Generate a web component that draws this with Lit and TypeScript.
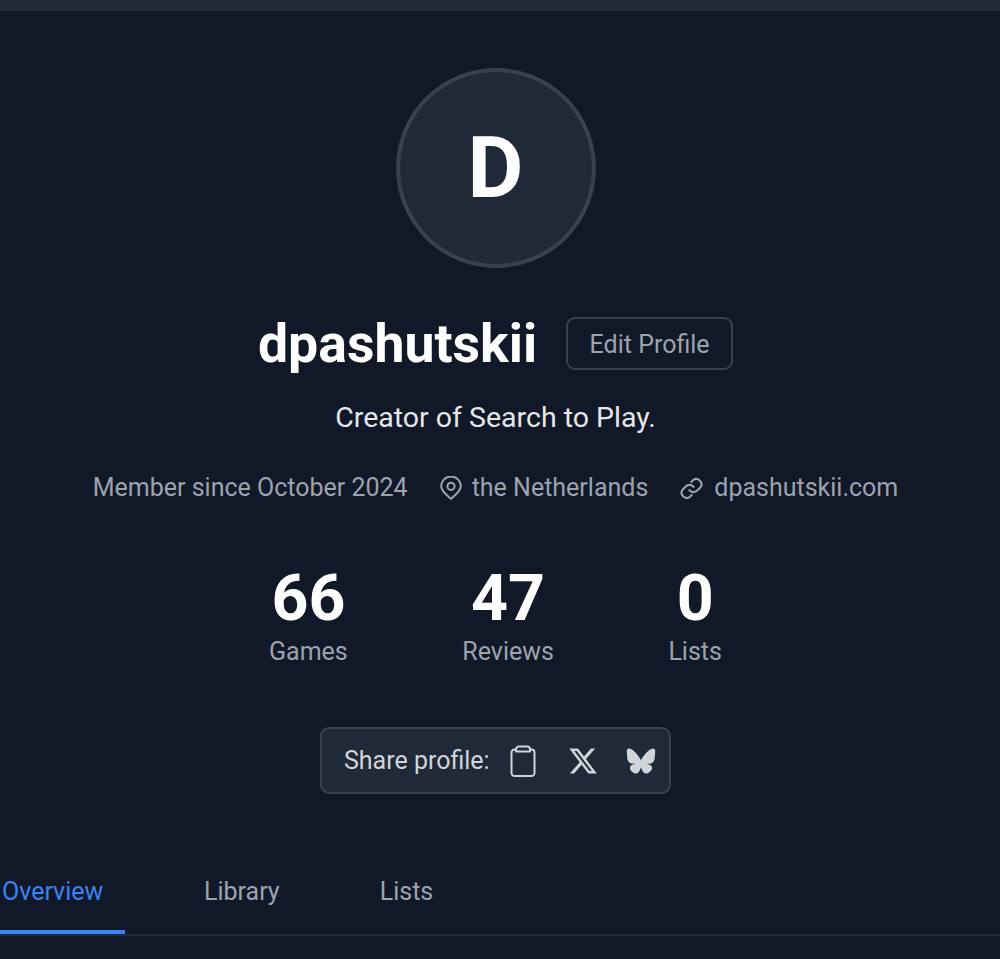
import { LitElement, css, html } from 'lit'
import { customElement } from 'lit/decorators.js'

@customElement('app-root')
export class AppRoot extends LitElement {
  static styles = css`
    :host {
      display: block;
      height: 959px;
      overflow: hidden;
      background: #111827;
      font-family: Roboto, 'Liberation Sans', sans-serif;
      color: #9ca3af;
    }
    .topbar {
      height: 11px;
      background: #1f2937;
    }
    .profile {
      display: flex;
      flex-direction: column;
      align-items: center;
      padding: 57px 9px 0 0;
    }
    .avatar {
      box-sizing: border-box;
      width: 200px;
      height: 200px;
      border: 4px solid #374151;
      border-radius: 50%;
      background: #1f2937;
      color: #fff;
      display: flex;
      align-items: center;
      justify-content: center;
      font-size: 86px;
      font-weight: 700;
      line-height: 1;
    }
    .name-row {
      display: flex;
      align-items: center;
      gap: 29px;
      margin-top: 49px;
      height: 53px;
    }
    h1 {
      margin: 0;
      font-size: 53.6px;
      line-height: 1;
      font-weight: 700;
      color: #fff;
    }
    .edit {
      box-sizing: border-box;
      height: 53px;
      width: 167px;
      border: 2px solid #374151;
      border-radius: 9px;
      background: none;
      color: #9ca3af;
      font: inherit;
      font-size: 25px;
      padding: 2px 0 0;
    }
    .bio {
      margin: 30px 0 0;
      font-size: 28.5px;
      line-height: 36px;
      color: #e5e7eb;
    }
    .meta {
      display: flex;
      align-items: center;
      gap: 31px;
      margin-top: 34px;
      font-size: 25px;
      line-height: 36px;
    }
    .meta-item {
      display: flex;
      align-items: center;
      gap: 10px;
    }
    .meta-item.place {
      margin-left: 1px;
    }
    .meta-item svg {
      display: block;
      fill: none;
      stroke: currentColor;
      stroke-width: 2;
      stroke-linecap: round;
      stroke-linejoin: round;
    }
    .stats {
      display: flex;
      gap: 114.5px;
      margin-top: 56px;
    }
    .stat {
      display: flex;
      flex-direction: column;
      align-items: center;
    }
    .num {
      font-size: 64.5px;
      line-height: 72px;
      font-weight: 700;
      color: #fff;
    }
    .label {
      font-size: 25px;
      line-height: 36px;
    }
    .share {
      box-sizing: border-box;
      display: flex;
      align-items: center;
      width: 351px;
      height: 67px;
      margin-top: 57px;
      padding: 0 22px;
      border: 2px solid #374151;
      border-radius: 9px;
      background: #1f2937;
      color: #d1d5db;
      font-size: 25px;
    }
    .share-label {
      white-space: nowrap;
    }
    .share svg {
      display: block;
      flex: none;
    }
    .clip {
      margin-left: 20px;
    }
    .x {
      margin-left: 33px;
    }
    .bsky {
      margin-left: 29px;
    }
    .tabs {
      display: flex;
      height: 74px;
      margin-top: 68px;
      border-bottom: 2px solid #1f2937;
      box-sizing: border-box;
      font-size: 25px;
    }
    .tab {
      box-sizing: border-box;
      height: 72px;
      padding: 12px 0 0;
      line-height: 36px;
      margin-right: 100px;
    }
    .tab.active {
      width: 125px;
      padding-left: 2px;
      margin-right: 79px;
      color: #3b82f6;
      border-bottom: 4px solid #3b82f6;
    }
  `

  render() {
    return html`
      <div class="topbar"></div>
      <section class="profile">
        <div class="avatar">D</div>
        <div class="name-row">
          <h1>dpashutskii</h1>
          <button class="edit">Edit Profile</button>
        </div>
        <p class="bio">Creator of Search to Play.</p>
        <div class="meta">
          <span class="meta-item">Member since October 2024</span>
          <span class="meta-item place">
            <svg width="22" height="24" viewBox="0 0 22 24"><path d="M11 22.800C7 19.300 1.200 15.300 1.200 10.300a9.800 9.800 0 0 1 19.600 0c0 5-5.800 9-9.800 12.500z"></path><circle cx="11" cy="10.300" r="3.600"></circle></svg>
            the Netherlands
          </span>
          <span class="meta-item">
            <svg width="25" height="25" viewBox="0 0 24 24"><path d="M10 13.500a5 5 0 0 0 7.500.500l3-3a5 5 0 0 0-7-7l-1.700 1.700"></path><path d="M14 10.500a5 5 0 0 0-7.500-.500l-3 3a5 5 0 0 0 7 7l1.700-1.700"></path></svg>
            dpashutskii.com
          </span>
        </div>
        <div class="stats">
          <div class="stat"><span class="num">66</span><span class="label">Games</span></div>
          <div class="stat"><span class="num">47</span><span class="label">Reviews</span></div>
          <div class="stat"><span class="num">0</span><span class="label">Lists</span></div>
        </div>
        <div class="share">
          <span class="share-label">Share profile:</span>
          <svg class="clip" width="26" height="32" viewBox="0 0 26 32" fill="none" stroke="#d1d5db" stroke-width="2" stroke-linejoin="round">
            <path d="M6 4.500H4.500A3 3 0 0 0 1.500 7.500v20.500a3 3 0 0 0 3 3h17a3 3 0 0 0 3-3V7.500a3 3 0 0 0-3-3H20"></path>
            <path d="M6 6.500V4.500A3 3 0 0 1 9 1.500h8a3 3 0 0 1 3 3v2z"></path>
          </svg>
          <svg class="x" width="28" height="26" viewBox="1 2 22 20" fill="#d1d5db">
            <path d="M18.244 2.250h3.308l-7.227 8.260 8.502 11.240H16.170l-5.214-6.817L4.990 21.750H1.680l7.730-8.835L1.254 2.250H8.080l4.713 6.231zm-1.161 17.520h1.833L7.084 4.126H5.117z"></path>
          </svg>
          <svg class="bsky" width="30" height="26" viewBox="0 0 600 530" fill="#d1d5db">
            <path d="M135.700 44c66.500 50 138 151.200 164.300 205.500 26.300-54.300 97.800-155.600 164.300-205.500 48-36 125.700-63.900 125.700 24.800 0 17.700-10.100 148.700-16.100 170-20.700 73.800-96 92.600-163 81.200 117.200 20 147 86.100 82.600 152.300-122.300 125.500-175.800-31.500-189.500-71.700-2.500-7.400-3.700-10.800-3.700-7.900 0-2.900-1.200 0.500-3.700 7.900-13.700 40.200-67.200 197.200-189.500 71.700-64.400-66.200-34.600-132.300 82.600-152.300-67 11.400-142.300-7.400-163-81.200-6-21.300-16.100-152.300-16.100-170 0-88.700 77.700-60.800 125.700-24.800z"></path>
          </svg>
        </div>
      </section>
      <nav class="tabs">
        <div class="tab active">Overview</div>
        <div class="tab">Library</div>
        <div class="tab">Lists</div>
      </nav>
    `
  }
}
